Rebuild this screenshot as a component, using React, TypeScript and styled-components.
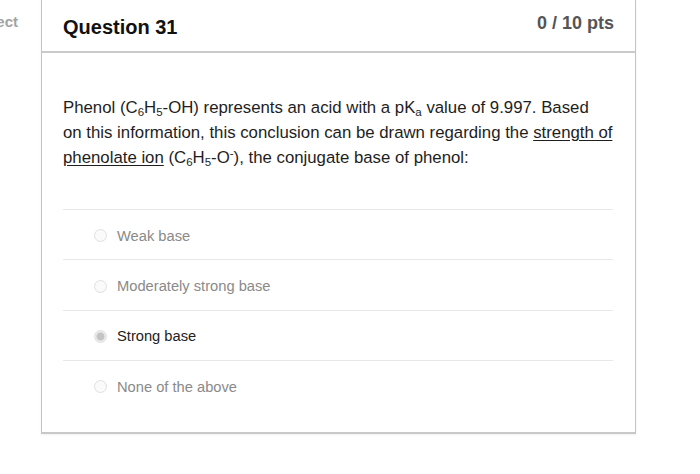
import styled, {createGlobalStyle} from "styled-components";

const GlobalStyle = createGlobalStyle`
    html, body {
        margin: 0;
        padding: 0;
        background: #ffffff;
    }
    body {
        font-family: "Liberation Sans", Arial, sans-serif;
        color: #333333;
    }
`

type AnswerType = {
    label: string;
    selected?: boolean;
};

const answers: AnswerType[] = [
    {label: "Weak base"},
    {label: "Moderately strong base"},
    {label: "Strong base", selected: true},
    {label: "None of the above"},
];

export default function App() {
    return (
        <>
            <GlobalStyle/>
            <Page>
                <Gutter>
                    <Status>Incorrect</Status>
                </Gutter>
                <Card>
                    <Header>
                        <Title>Question 31</Title>
                        <Points>0 / 10 pts</Points>
                    </Header>
                    <Body>
                        <QuestionText>
                            Phenol (C<Sub>6</Sub>H<Sub>5</Sub>-OH) represents an acid with a pK<Sub>a</Sub> value of 9.997. Based
                            <br/>
                            on this information, this conclusion can be drawn regarding the <Underline>strength of</Underline>
                            <br/>
                            <Underline>phenolate ion</Underline> (C<Sub>6</Sub>H<Sub>5</Sub>-O<Sup>-</Sup>), the conjugate base of phenol:
                        </QuestionText>
                        <Answers>
                            {answers.map((a) => (
                                <AnswerRow key={a.label}>
                                    <Radio $selected={a.selected}/>
                                    <AnswerLabel $selected={a.selected}>{a.label}</AnswerLabel>
                                </AnswerRow>
                            ))}
                        </Answers>
                    </Body>
                </Card>
            </Page>
        </>
    );
}

const Page = styled.div`
    display: flex;
    align-items: flex-start;
    width: 700px;
    height: 474px;
    overflow: hidden;
`

const Gutter = styled.div`
    width: 41px;
    flex-shrink: 0;
    display: flex;
    justify-content: flex-end;
    overflow: hidden;
    padding-top: 13px;
`

const Status = styled.span`
    white-space: nowrap;
    padding-right: 23px;
    font-size: 15px;
    font-weight: bold;
    color: #a3a3a3;
`

const Card = styled.div`
    width: 593px;
    border-left: 1px solid #c4c4c4;
    border-right: 1px solid #c4c4c4;
    border-bottom: 2px solid #c8c8c8;
    box-shadow: 0 1px 2px rgba(0, 0, 0, 0.06);
    background: #ffffff;
`

const Header = styled.div`
    height: 51px;
    display: flex;
    justify-content: space-between;
    align-items: flex-start;
    padding: 0 21px;
    border-bottom: 2px solid #cacaca;
`

const Title = styled.h2`
    margin: 16px 0 0;
    font-size: 20px;
    font-weight: bold;
    line-height: normal;
    color: #111111;
`

const Points = styled.div`
    margin-top: 13px;
    font-size: 18px;
    font-weight: bold;
    color: #555555;
`

const Body = styled.div`
    padding: 42px 21px 21px;
`

const QuestionText = styled.p`
    margin: 0;
    font-size: 16.8px;
    line-height: 25px;
    color: #1e1e1e;
    white-space: nowrap;
`

const Sub = styled.sub`
    font-size: 11.5px;
    line-height: 0;
    vertical-align: -3px;
`

const Sup = styled.sup`
    font-size: 11.5px;
    line-height: 0;
    vertical-align: 6px;
`

const Underline = styled.span`
    text-decoration: underline;
    text-underline-offset: 2px;
`

const Answers = styled.div`
    margin-top: 39px;
    width: 550px;
`

const AnswerRow = styled.div`
    height: 50.4px;
    box-sizing: border-box;
    border-top: 1px solid #e8e8e8;
    display: flex;
    align-items: center;
    padding: 2px 0 0 31px;
`

const Radio = styled.span<{ $selected?: boolean }>`
    width: 13px;
    height: 13px;
    box-sizing: border-box;
    border-radius: 50%;
    border: 1px solid #e0e0e0;
    background: ${(p) => (p.$selected ? "radial-gradient(circle, #c4c4c4 0 3.5px, #ececec 4.5px)" : "#fafafa")};
    margin-right: 10px;
    flex-shrink: 0;
`

const AnswerLabel = styled.span<{ $selected?: boolean }>`
    font-size: 14.7px;
    color: ${(p) => (p.$selected ? "#222222" : "#8a8a8a")};
`
